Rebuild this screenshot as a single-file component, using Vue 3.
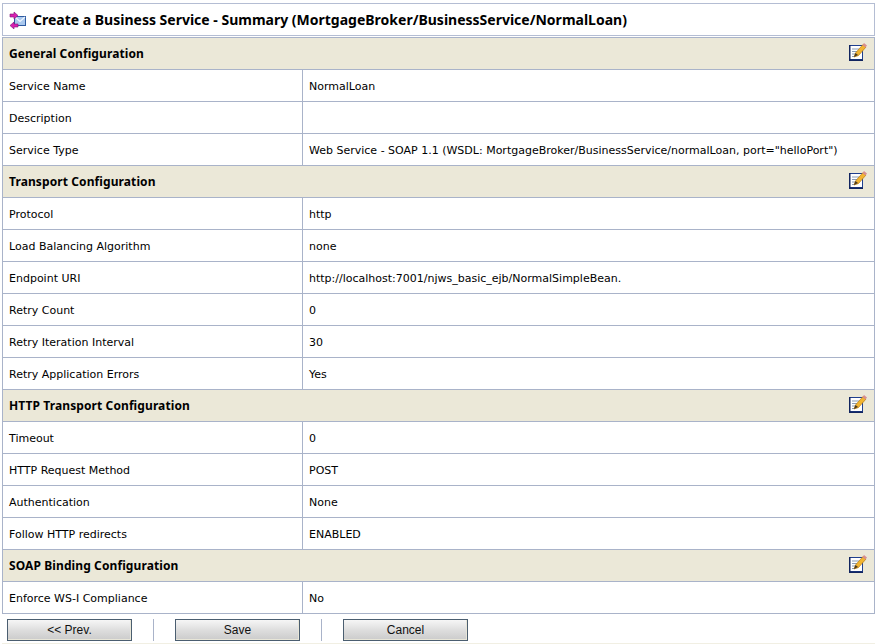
<template>
  <div class="page">
    <div class="title-box">
      <svg class="title-icon" width="18" height="18" viewBox="0 0 18 18">
        <rect x="5.500" y="5.500" width="11" height="9" fill="#a9c8ee" stroke="#2d5aa0" />
        <path d="M6 6l5 4.500 5-4.500" fill="none" stroke="#eef5fd" stroke-width="1.300" />
        <path d="M1 3h4V1l4 3.500L5 8V6H1z" fill="#d81fb0" stroke="#7d1a78" stroke-width="0.600" />
        <path d="M9 13H5v-2l-4 3.500L5 18v-2h4z" fill="#d81fb0" stroke="#7d1a78" stroke-width="0.600" />
      </svg>
      <h1 class="title">Create a Business Service - Summary (MortgageBroker/BusinessService/NormalLoan)</h1>
    </div>

    <div class="summary">
      <template v-for="section in sections" :key="section.name">
        <div class="section-head">
          <span>{{ section.name }}</span>
          <svg class="edit-icon" width="18" height="18" viewBox="0 0 18 18">
            <rect x="0.500" y="2.500" width="13" height="14" fill="#fff" stroke="#1f3f8f" />
            <path d="M0 2h1.500v16H0zM0 16.500h14V18H0z" fill="#12255f" />
            <path d="M3 6h7M3 8.500h6M3 11h4M3 13.500h3" stroke="#8a9bb5" />
            <path d="M5 14l1.500-4 7.500-8.500 3 2.500-7.500 8.500z" fill="#f2b431" stroke="#b57a12" stroke-width="0.700" />
            <path d="M13.500 2l1.500-2 3 2.500-1.500 2z" fill="#d88f8f" />
            <path d="M5 14l1.500-4 2.500 2z" fill="#4a3a22" />
          </svg>
        </div>
        <div v-for="row in section.rows" :key="row[0]" class="row">
          <div class="label">{{ row[0] }}</div>
          <div class="value">{{ row[1] }}</div>
        </div>
      </template>
    </div>

    <div class="actions">
      <button class="btn">&lt;&lt; Prev.</button>
      <span class="sep"></span>
      <button class="btn">Save</button>
      <span class="sep"></span>
      <button class="btn">Cancel</button>
    </div>
  </div>
</template>

<script setup>
const sections = [
  {
    name: 'General Configuration',
    rows: [
      ['Service Name', 'NormalLoan'],
      ['Description', ''],
      ['Service Type', 'Web Service - SOAP 1.1 (WSDL: MortgageBroker/BusinessService/normalLoan, port="helloPort")']
    ]
  },
  {
    name: 'Transport Configuration',
    rows: [
      ['Protocol', 'http'],
      ['Load Balancing Algorithm', 'none'],
      ['Endpoint URI', 'http://localhost:7001/njws_basic_ejb/NormalSimpleBean.'],
      ['Retry Count', '0'],
      ['Retry Iteration Interval', '30'],
      ['Retry Application Errors', 'Yes']
    ]
  },
  {
    name: 'HTTP Transport Configuration',
    rows: [
      ['Timeout', '0'],
      ['HTTP Request Method', 'POST'],
      ['Authentication', 'None'],
      ['Follow HTTP redirects', 'ENABLED']
    ]
  },
  {
    name: 'SOAP Binding Configuration',
    rows: [['Enforce WS-I Compliance', 'No']]
  }
]
</script>

<style scoped>
.page {
  width: 878px;
  height: 644px;
  padding: 3px 3px 0 2px;
  box-sizing: border-box;
  background: #fff;
  font-family: "DejaVu Sans", sans-serif;
  font-size: 11px;
  color: #000;
  overflow: hidden;
}

.title-box {
  display: flex;
  align-items: center;
  gap: 6px;
  height: 33px;
  box-sizing: border-box;
  padding-left: 6px;
  border: 1px solid #b4bdd3;
}

.title-icon {
  flex: none;
}

.title {
  margin: 0;
  font-family: "Noto Sans", sans-serif;
  font-size: 14px;
  font-weight: bold;
  color: #000;
  white-space: nowrap;
}

.summary {
  margin-top: 1px;
  border: 1px solid #a9b3c9;
  border-bottom: none;
}

.section-head {
  display: flex;
  align-items: center;
  justify-content: space-between;
  height: 32px;
  box-sizing: border-box;
  padding: 0 7px 0 6px;
  background: #ebe8d8;
  border-bottom: 1px solid #a9b3c9;
  font-family: "Noto Sans", sans-serif;
  font-size: 12px;
  font-weight: bold;
  letter-spacing: 0.1px;
}

.edit-icon {
  margin-top: -3px;
}

.row {
  display: grid;
  grid-template-columns: 299px 1fr;
  height: 32px;
  box-sizing: border-box;
  border-bottom: 1px solid #a9b3c9;
}

.label,
.value {
  display: flex;
  align-items: center;
  padding: 1px 0 0 6px;
  white-space: nowrap;
}

.value {
  border-left: 1px solid #a9b3c9;
}

.actions {
  display: flex;
  align-items: center;
  gap: 21px;
  margin-top: 5px;
  padding: 0 0 2px 5px;
  border-bottom: 1px solid #f1efe3;
}

.btn {
  width: 125px;
  height: 22px;
  padding: 0;
  border: 1px solid #4b5e70;
  box-shadow: inset -1px -1px 0 #e8e6d8;
  background: linear-gradient(#f6f6f6, #dedede 50%, #cbcbcb);
  font-family: "Liberation Sans", sans-serif;
  font-size: 12px;
  color: #111;
}

.sep {
  width: 1px;
  height: 22px;
  background: #a9b3c9;
}
</style>

<style>
body {
  margin: 0;
}
</style>
